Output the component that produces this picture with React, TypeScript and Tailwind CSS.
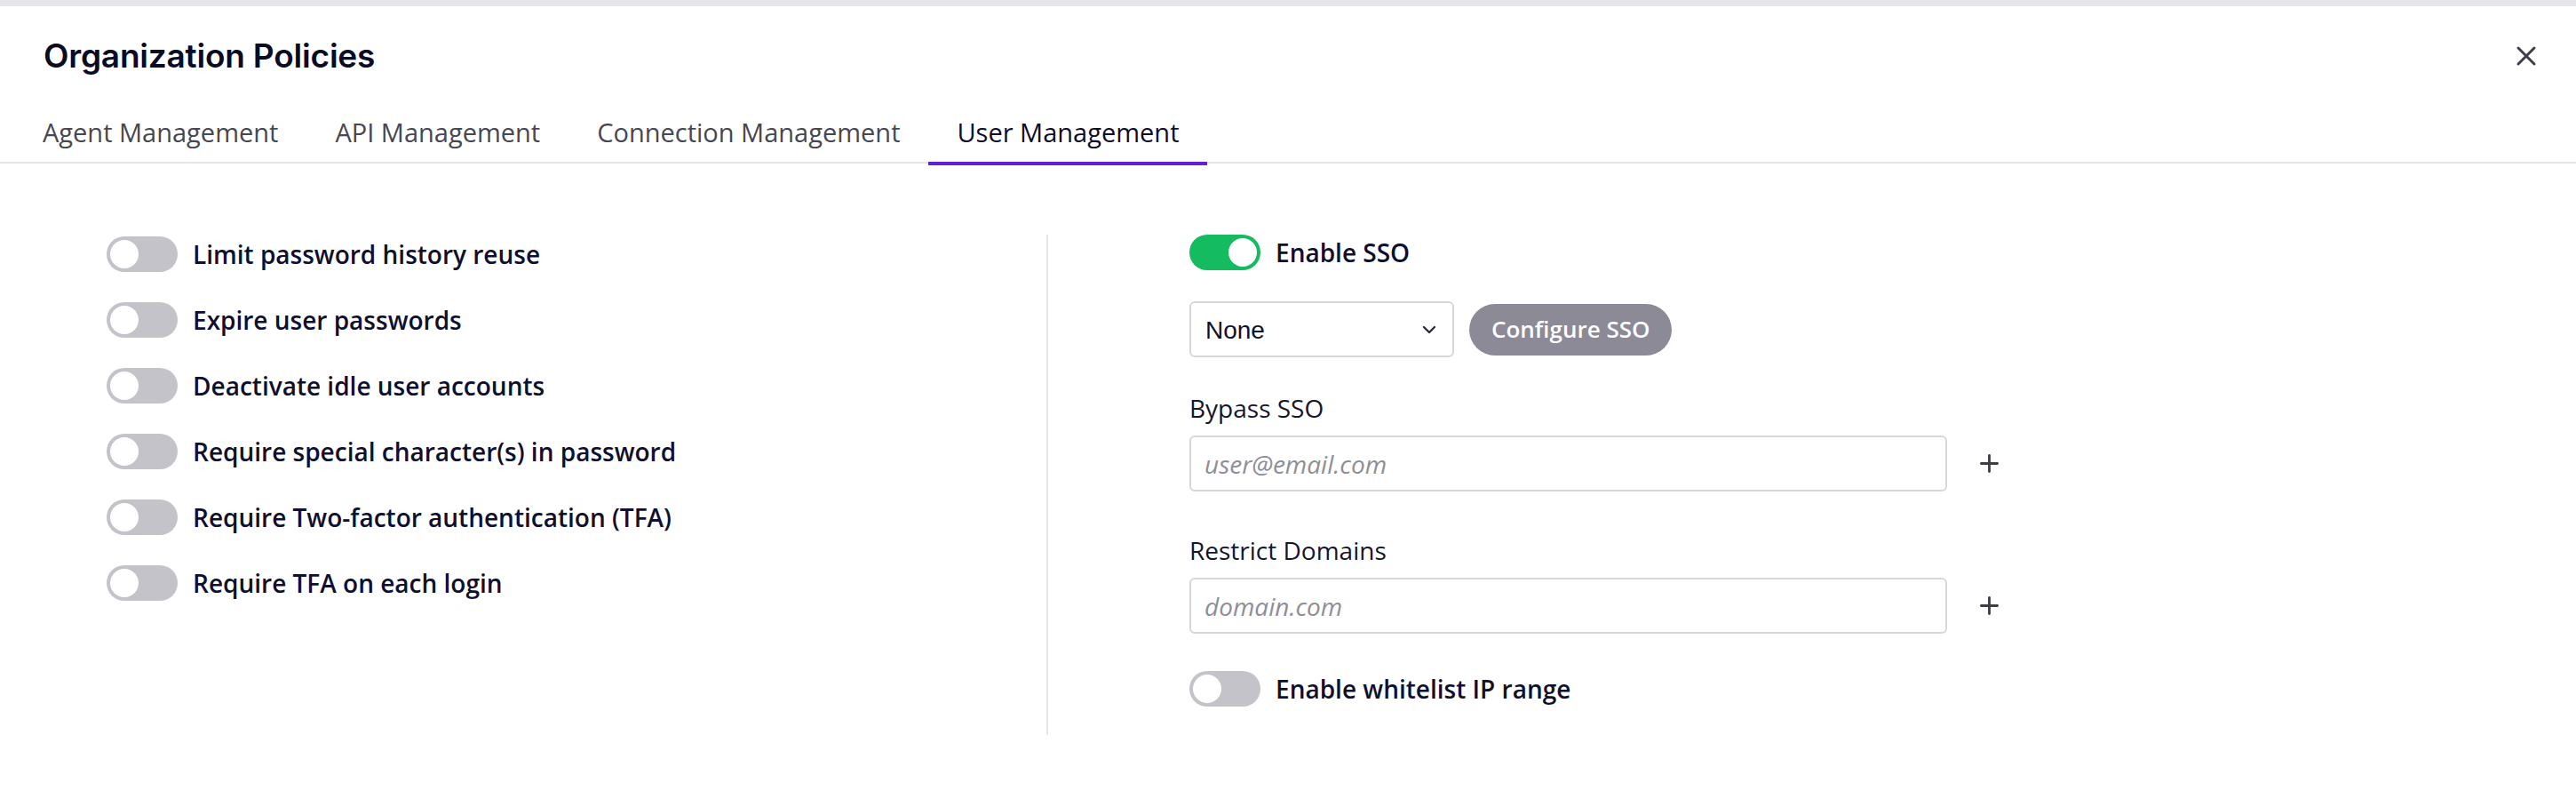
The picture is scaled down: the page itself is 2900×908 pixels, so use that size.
import { X, Plus, ChevronDown } from "lucide-react";

const tabs = ["Agent Management", "API Management", "Connection Management", "User Management"];

const leftPolicies = [
  "Limit password history reuse",
  "Expire user passwords",
  "Deactivate idle user accounts",
  "Require special character(s) in password",
  "Require Two-factor authentication (TFA)",
  "Require TFA on each login",
];

const Toggle = ({ on = false, label }: { on?: boolean; label: string }) => (
  <div className="flex items-center gap-[17px] h-[40px]">
    <button
      type="button"
      className={`w-[80px] h-[40px] rounded-full p-[4px] flex shrink-0 ${
        on ? "bg-[#14bb5f] justify-end" : "bg-[#c3c3c9] justify-start"
      }`}
    >
      <span className="block w-[32px] h-[32px] rounded-full bg-white" />
    </button>
    <span className="text-[28px] leading-[40px] font-semibold text-[#0f0f2e]">{label}</span>
  </div>
);

const InputRow = ({ placeholder }: { placeholder: string }) => (
  <div className="flex items-center">
    <input
      type="text"
      placeholder={placeholder}
      className="w-[853px] h-[63px] border-2 border-[#d6d6dd] rounded-[6px] px-[15px] text-[28px] text-[#0f0f2e] outline-none placeholder:italic placeholder:text-[#8e8e97]"
    />
    <button type="button" className="ml-[32px] text-[#3d3d4a]">
      <Plus size={31} strokeWidth={2.2} />
    </button>
  </div>
);

export default function App() {
  return (
    <div className="w-full min-h-[908px] bg-white font-['Open_Sans',sans-serif]">
      <div className="h-[7px] bg-[#e5e5ea]" />

      {/* Header */}
      <div className="flex items-center justify-between pl-[49px] pr-[38px] pt-[29px]">
        <h1 className="font-['Inter',sans-serif] text-[37px] leading-[54px] font-semibold tracking-[-0.2px] text-[#0b0b24]">
          Organization Policies
        </h1>
        <button type="button" className="text-[#3d3d4a]">
          <X size={36} strokeWidth={2} />
        </button>
      </div>

      {/* Tabs */}
      <div className="mt-[22px] flex pl-[16px] border-b-2 border-[#e5e5ea]">
        {tabs.map((t, i) => {
          const active = i === tabs.length - 1;
          return (
            <button
              key={t}
              type="button"
              className={`px-[32px] pt-[17px] pb-[13px] -mb-[4px] border-b-4 text-[29px] leading-[40px] ${
                active ? "border-[#5f21d9] text-[#0d0d2b]" : "border-transparent text-[#474752]"
              }`}
            >
              {t}
            </button>
          );
        })}
      </div>

      {/* Body */}
      <div className="mt-[80px] flex pl-[120px]">
        <div className="w-[1058px] pt-[2px] flex flex-col gap-[34px]">
          {leftPolicies.map((p) => (
            <Toggle key={p} label={p} />
          ))}
        </div>

        <div className="w-[2px] bg-[#e5e5ea]" />

        <div className="pl-[159px] pb-[32px] flex flex-col">
          <Toggle on label="Enable SSO" />

          <div className="mt-[35px] flex items-center gap-[17px]">
            <div className="w-[298px] h-[63px] border-2 border-[#d6d6dd] rounded-[6px] pl-[16px] pr-[14px] flex items-center justify-between">
              <span className="font-['Liberation_Sans',sans-serif] text-[28px] text-[#0f0f2e] pt-[2px]">None</span>
              <ChevronDown size={24} strokeWidth={2.4} className="text-[#2b2b3a]" />
            </div>
            <button
              type="button"
              className="h-[58px] px-[25px] rounded-full bg-[#8b8a96] text-white text-[26px] font-semibold"
            >
              Configure SSO
            </button>
          </div>

          <label className="mt-[37px] text-[28px] leading-[40px] text-[#15152e]">Bypass SSO</label>
          <div className="mt-[11px]">
            <InputRow placeholder="user@email.com" />
          </div>

          <label className="mt-[46px] text-[28px] leading-[40px] text-[#15152e]">Restrict Domains</label>
          <div className="mt-[11px]">
            <InputRow placeholder="domain.com" />
          </div>

          <div className="mt-[42px]">
            <Toggle label="Enable whitelist IP range" />
          </div>
        </div>
      </div>
    </div>
  );
}
